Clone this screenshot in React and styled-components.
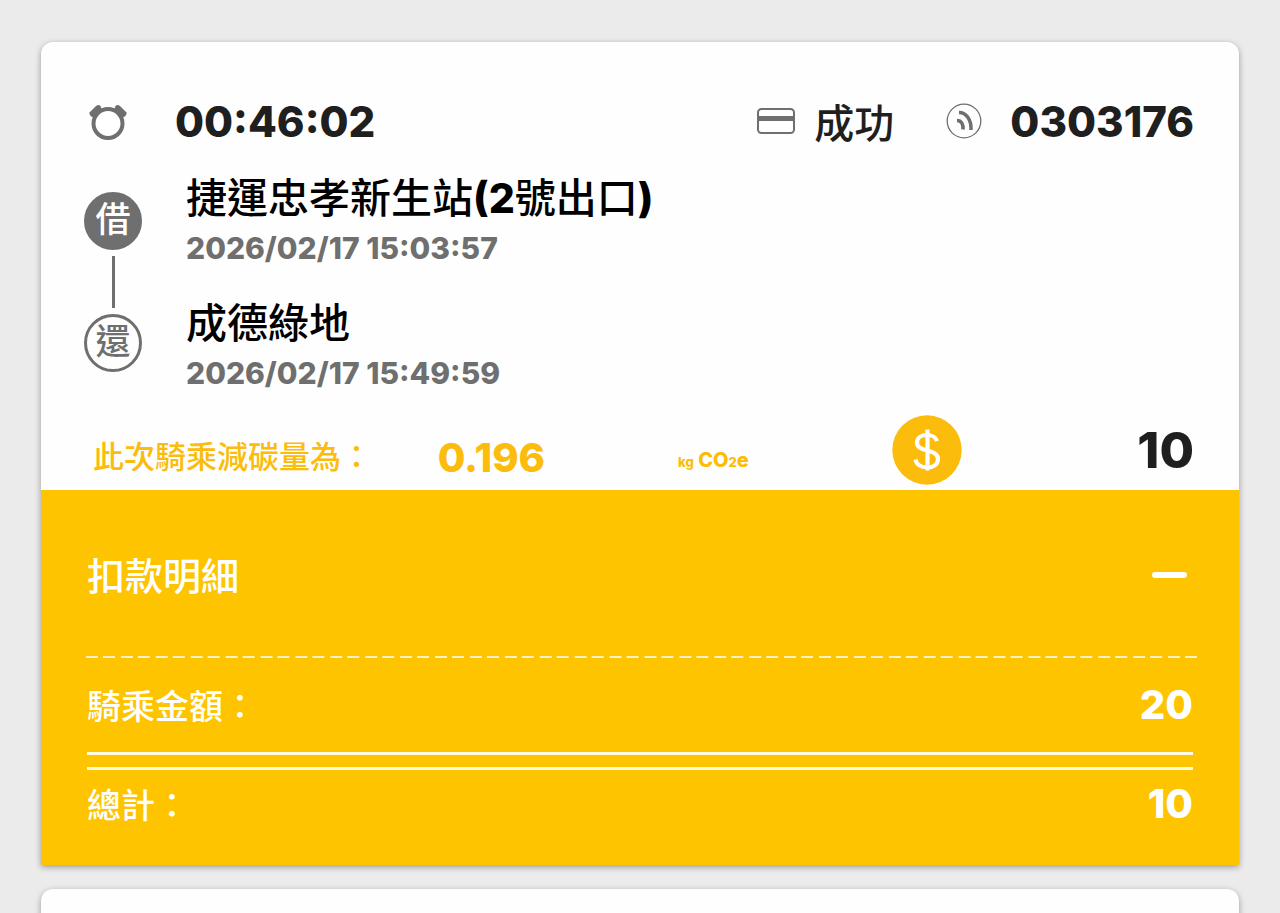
import { useState } from 'react'
import styled, { createGlobalStyle } from 'styled-components'

const ride = {
  duration: '00:46:02',
  status: '成功',
  bike: '0303176',
  carbon: '0.196',
  cost: 10,
  stops: [
    { name: '捷運忠孝新生站(2號出口)', time: '2026/02/17 15:03:57' },
    { name: '成德綠地', time: '2026/02/17 15:49:59' },
  ],
  fare: 20,
  total: 10,
}

// latin runs in station names are set heavier than the chinese around them
function mixedWeight(text) {
  return text.split(/([\x21-\x7e]+)/).map((part, i) => i % 2 ? <b key={i}>{part}</b> : part)
}

export default function App() {
  const [ isOpen, setIsOpen ] = useState(true)

  return (
    <>
      <GlobalStyle />
      <StyledPage>
        <StyledCard>
          <StyledSummary>
            <StyledHeader>
              <AlarmIcon />
              <StyledDuration>{ride.duration}</StyledDuration>
              <StyledStatus>
                <CardIcon />
                {ride.status}
              </StyledStatus>
              <StyledBike>
                <SignalIcon />
                {ride.bike}
              </StyledBike>
            </StyledHeader>

            <StyledRoute>
              <StyledTrack>
                <StyledBadge $filled>借</StyledBadge>
                <StyledTrackLine />
                <StyledBadge>還</StyledBadge>
              </StyledTrack>
              <StyledStops>
                {ride.stops.map(({ name, time }) => <li key={time}>
                  <StyledStopName>{mixedWeight(name)}</StyledStopName>
                  <StyledStopTime>{time}</StyledStopTime>
                </li>)}
              </StyledStops>
            </StyledRoute>

            <StyledFooter>
              <StyledCarbonLabel>此次騎乘減碳量為：</StyledCarbonLabel>
              <StyledCarbon>{ride.carbon}</StyledCarbon>
              <StyledUnit><small>kg</small> CO<small>2</small>e</StyledUnit>
              <CoinIcon />
              <StyledCost>{ride.cost}</StyledCost>
            </StyledFooter>
          </StyledSummary>

          <StyledDetails>
            <StyledDetailsHeader>
              <h2>扣款明細</h2>
              <StyledToggle
                type="button"
                aria-label="扣款明細"
                aria-expanded={isOpen}
                onClick={() => setIsOpen(!isOpen)}
              />
            </StyledDetailsHeader>
            {isOpen && <>
              <StyledDashes />
              <StyledLine $height="94px">
                <span>騎乘金額：</span>
                <strong>{ride.fare}</strong>
              </StyledLine>
              <StyledDoubleRule />
              <StyledLine $height="68px">
                <span>總計：</span>
                <strong>{ride.total}</strong>
              </StyledLine>
            </>}
          </StyledDetails>
        </StyledCard>

        <StyledNextCard />
      </StyledPage>
    </>)
}

function AlarmIcon() {
  return (
    <svg width="42" height="38" viewBox="-2 -2 42 38" aria-hidden="true">
      <g fill="#6f6f6f">
        <path d="M1.500 8.500 8 2Q10.500 0 12.500 2L14 6 6.500 13H4Q1 11 1.500 8.500Z" />
        <path d="M38.500 8.500 32 2Q29.500 0 27.500 2L26 6l7.500 7H36q3-2 2.500-4.500Z" />
      </g>
      <circle cx="20" cy="19.500" r="14.500" fill="#fff" stroke="#6f6f6f" strokeWidth="4" />
    </svg>)
}

function CardIcon() {
  return (
    <svg width="38" height="28" viewBox="0 0 38 28" fill="none" stroke="#6f6f6f" aria-hidden="true">
      <rect x="1" y="2" width="36" height="24" rx="3.500" strokeWidth="2" />
      <path d="M1 11.500H37" strokeWidth="5" />
    </svg>)
}

function SignalIcon() {
  return (
    <svg width="36" height="36" viewBox="0 0 36 36" fill="none" stroke="#6f6f6f" aria-hidden="true">
      <circle cx="18" cy="18" r="16.800" strokeWidth="1.300" />
      <path d="M13 9.500C20.500 9.500 25.500 17 25 27M11 17.500c4.500 0 6.500 4 6 9" strokeWidth="3.500" />
    </svg>)
}

function CoinIcon() {
  return (
    <svg width="70" height="70" viewBox="0 0 70 70" fill="none" aria-hidden="true">
      <circle cx="35" cy="35" r="34.700" fill="#fbbc0c" />
      <path
        d="M45 26c-1-3.500-5-6-10-6-6 0-10 3-10 7.500 0 5 4.500 6.500 10 8s11 3 11 8.500-5 8.500-11 8.500c-6 0-10.500-3-11.500-8M35.500 14.500v41"
        stroke="#fff"
        strokeWidth="4.200"
      />
    </svg>)
}

const GlobalStyle = createGlobalStyle`
  * {
    box-sizing: border-box;
  }

  body {
    margin: 0;
    background: #ebebeb;
    color: #1f1f1f;
    font-family: Inter, 'Noto Sans CJK TC', sans-serif;
    font-weight: 500;
  }

  b, strong {
    font-weight: 800;
  }

  h2, p, ul {
    margin: 0;
    padding: 0;
  }
`

const StyledPage = styled.main`
  height: 100vh;
  overflow: hidden;
  padding: 42px 41px 0;
  display: flex;
  flex-direction: column;
  gap: 24px;
`

const StyledCard = styled.article`
  flex: none;
  border-radius: 12px 12px 0 0;
  background: #fefefe;
  box-shadow: 0 2px 6px rgba(0, 0, 0, .35);
`

const StyledNextCard = styled(StyledCard)`
  height: 120px;
`

const StyledSummary = styled.div`
  padding: 48px 45px 0;
`

const StyledHeader = styled.header`
  display: flex;
  align-items: center;
  height: 62px;
`

const StyledDuration = styled.strong`
  margin-inline-start: 47px;
  font-size: 42px;
`

const StyledStatus = styled.span`
  margin-inline-start: auto;
  display: flex;
  align-items: center;
  gap: 19px;
  font-size: 40px;
`

const StyledBike = styled.strong`
  margin-inline-start: 52px;
  display: flex;
  align-items: center;
  gap: 28px;
  font-size: 42px;
`

const StyledRoute = styled.div`
  display: flex;
  gap: 44px;
  margin-inline-start: -2px;
  padding-block-start: 20px;
`

const StyledTrack = styled.div`
  padding-block-start: 20px;
  display: flex;
  flex-direction: column;
  align-items: center;
`

const StyledBadge = styled.span`
  width: 58px;
  height: 58px;
  border: 3px solid #6f6f6f;
  border-radius: 50%;
  background: ${props => props.$filled ? '#6f6f6f' : 'transparent'};
  color: ${props => props.$filled ? '#fff' : '#6f6f6f'};
  font-size: 35px;
  line-height: 48px;
  text-align: center;
`

const StyledTrackLine = styled.span`
  width: 3px;
  height: 52px;
  margin-block: 6px;
  background: #6f6f6f;
`

const StyledStops = styled.ul`
  list-style: none;

  li {
    height: 125px;
  }
`

const StyledStopName = styled.p`
  color: #000;
  font-size: 41px;
  line-height: 52px;
`

const StyledStopTime = styled.p`
  color: #6f6f6f;
  font-size: 30px;
  font-weight: 800;
  line-height: 48px;
`

const StyledFooter = styled.div`
  display: grid;
  grid-template-columns: 344fr 240fr 214fr 70fr 231fr;
  align-items: center;
  height: 75px;
  margin-block-start: -7px;
  padding-inline-start: 7px;
  padding-block-end: 5px;
  color: #fbbc0c;
`

const StyledCarbonLabel = styled.span`
  padding-block-start: 8px;
  font-size: 31px;
  white-space: nowrap;
`

const StyledCarbon = styled.strong`
  padding-block-start: 14px;
  font-size: 40px;
`

const StyledUnit = styled.span`
  padding-block-start: 20px;
  font-size: 20px;
  font-weight: 800;

  small {
    font-size: 13px;
  }
`

const StyledCost = styled.strong`
  color: #1f1f1f;
  font-size: 50px;
  line-height: 56px;
  text-align: end;
`

const StyledDetails = styled.section`
  padding-block-end: 27px;
  background: #ffc400;
  color: #fff;
`

const StyledDetailsHeader = styled.div`
  display: flex;
  align-items: center;
  justify-content: space-between;
  height: 166px;
  padding-inline: 46px;

  h2 {
    font-size: 38px;
    font-weight: 500;
  }
`

const StyledToggle = styled.button`
  width: 48px;
  height: 48px;
  border: 0;
  padding: 3px 0 0;
  background: none;
  cursor: pointer;

  &::before {
    display: block;
    width: 35px;
    height: 6px;
    margin-inline-start: 7px;
    border-radius: 3px;
    background: #fff;
    content: '';
  }
`

const StyledDashes = styled.div`
  height: 2px;
  margin-inline: 45px 36px;
  background: linear-gradient(
    to right,
    #fff3c4 33%, transparent 33% 50%, #fff3c4 50% 83%, transparent 83%
  ) 0 0 / 35px 2px round;
`

const StyledLine = styled.div`
  display: flex;
  align-items: center;
  justify-content: space-between;
  height: ${props => props.$height};
  padding-inline: 46px;
  padding-block-end: 2px;
  font-size: 34px;

  strong {
    font-size: 40px;
  }
`

const StyledDoubleRule = styled.div`
  height: 18px;
  margin-inline: 46px;
  border-block: 3px solid #fffbe0;
`
